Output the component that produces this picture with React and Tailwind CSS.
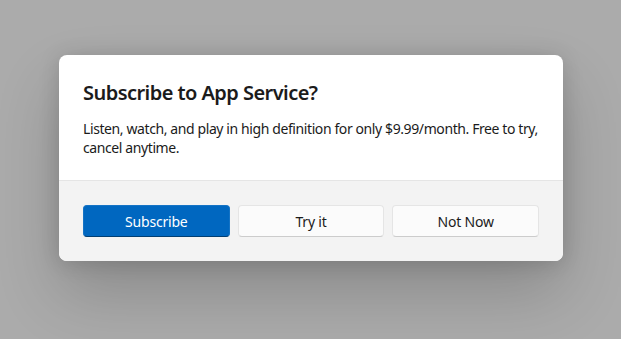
export default function App() {
  const font = { fontFamily: '"Segoe UI", "Noto Sans", "Open Sans", sans-serif' };
  return (
    <div className="w-[621px] h-[339px] bg-[#ababab] pt-[55px] pl-[59px] overflow-hidden" style={font}>
      <div className="w-[504px] rounded-[8px] overflow-hidden bg-white shadow-[0_32px_64px_rgba(0,0,0,0.19),0_2px_21px_rgba(0,0,0,0.15)] text-[#1b1b1b]">
        <div className="px-6 pt-6 pb-5 h-[125px]">
          <h1 className="text-[20px] leading-[28px] font-semibold tracking-[-0.55px]">Subscribe to App Service?</h1>
          <p className="mt-3 text-[14px] leading-[19px] tracking-[-0.4px] w-[465px]">
            Listen, watch, and play in high definition for only $9.99/month. Free to try, cancel anytime.
          </p>
        </div>
        <div className="border-t border-[#e5e5e5] bg-[#f3f3f3] p-6 flex gap-2">
          <button className="w-[147px] h-8 rounded-[4px] bg-[#0067c0] border border-[#1473c5] border-b-[#003e73] text-white text-[14px] tracking-[-0.2px]">Subscribe</button>
          <button className="w-[147px] h-8 rounded-[4px] bg-[#fbfbfb] border border-[#e5e5e5] border-b-[#cccccc] text-[14px] tracking-[-0.2px]">Try it</button>
          <button className="w-[147px] h-8 rounded-[4px] bg-[#fbfbfb] border border-[#e5e5e5] border-b-[#cccccc] text-[14px] tracking-[-0.2px]">Not Now</button>
        </div>
      </div>
    </div>
  );
}
